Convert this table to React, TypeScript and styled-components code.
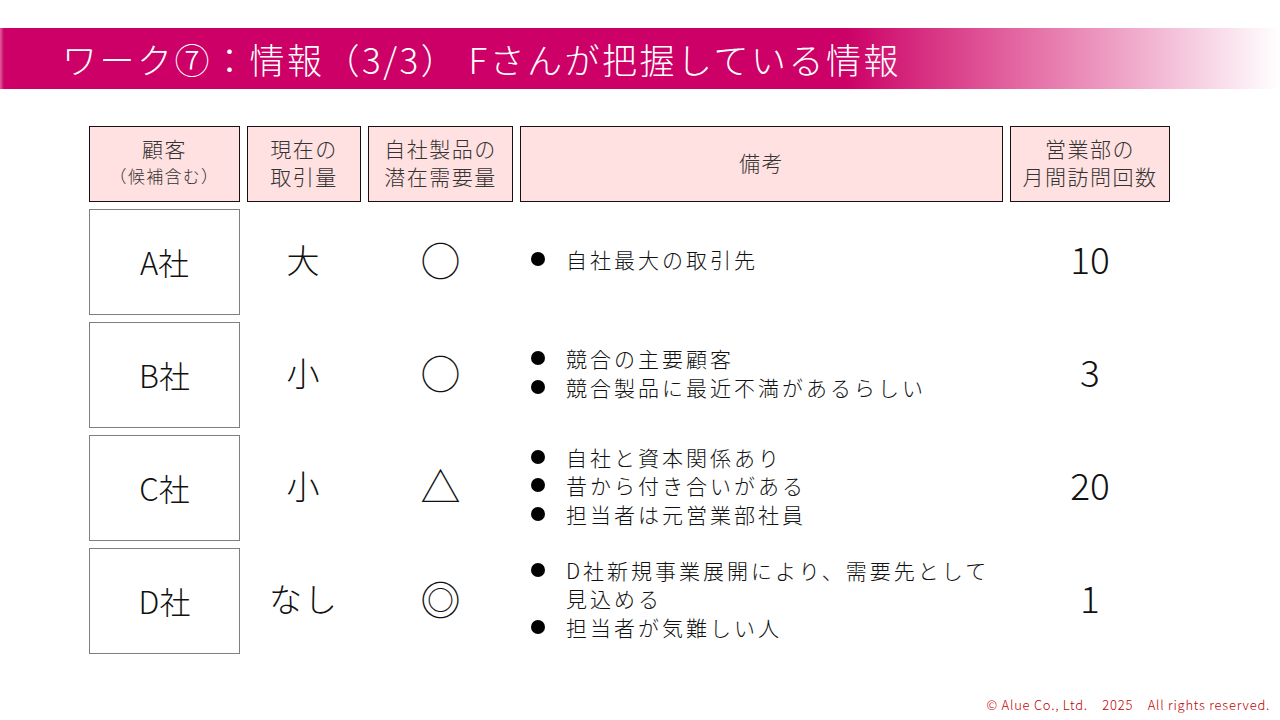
import styled, {createGlobalStyle} from "styled-components"

const GlobalStyle = createGlobalStyle`
  html, body {
    margin: 0;
    padding: 0;
    background: #fff;
  }
  body {
    font-family: "Noto Sans CJK JP", "Noto Sans", sans-serif;
    font-weight: 300;
    color: #111;
  }
`

type Row = {
  name: string
  amount: string
  potential: string
  notes: string[][]
  visits: string
}

const rows: Row[] = [
  {name: "A社", amount: "大", potential: "○", notes: [["自社最大の取引先"]], visits: "10"},
  {
    name: "B社", amount: "小", potential: "○",
    notes: [["競合の主要顧客"], ["競合製品に最近不満があるらしい"]],
    visits: "3"
  },
  {
    name: "C社", amount: "小", potential: "△",
    notes: [["自社と資本関係あり"], ["昔から付き合いがある"], ["担当者は元営業部社員"]],
    visits: "20"
  },
  {
    name: "D社", amount: "なし", potential: "◎",
    notes: [["D社新規事業展開により、需要先として", "見込める"], ["担当者が気難しい人"]],
    visits: "1"
  },
]

export default function App() {
  return (
    <Page>
      <GlobalStyle />
      <TitleBar>
        <Title>ワーク⑦：情報（3/3） Fさんが把握している情報</Title>
      </TitleBar>

      <Table>
        <HeadCell>
          <span>顧客</span>
          <Small>（候補含む）</Small>
        </HeadCell>
        <HeadCell>現在の<br />取引量</HeadCell>
        <HeadCell>自社製品の<br />潜在需要量</HeadCell>
        <HeadCell>備考</HeadCell>
        <HeadCell>営業部の<br />月間訪問回数</HeadCell>

        {rows.map((r) => (
          <RowGroup key={r.name}>
            <NameCell>{r.name}</NameCell>
            <AmountCell>{r.amount}</AmountCell>
            <SymbolCell>{r.potential}</SymbolCell>
            <NoteCell>
              {r.notes.map((lines, i) => (
                <Note key={i}>
                  <Dot />
                  <NoteText>
                    {lines.map((l, j) => (
                      <span key={j}>{l}</span>
                    ))}
                  </NoteText>
                </Note>
              ))}
            </NoteCell>
            <CountCell>{r.visits}</CountCell>
          </RowGroup>
        ))}
      </Table>

      <Footer>© Alue Co., Ltd.&nbsp;&nbsp;&nbsp;&nbsp;2025&nbsp;&nbsp;&nbsp;&nbsp;All rights reserved.</Footer>
    </Page>
  )
}

const Page = styled.div`
  width: 1280px;
  height: 720px;
  display: flex;
  flex-direction: column;
  overflow: hidden;
`

const TitleBar = styled.div`
  margin-top: 28px;
  height: 61px;
  display: flex;
  align-items: center;
  padding-left: 62px;
  background: linear-gradient(90deg, #e0609a 0px, #cc0066 4px, #cc0066 66%, #e46ba4 80%, #ffffff 100%);
`

const Title = styled.h1`
  margin: 0;
  color: #fff;
  font-size: 35px;
  font-weight: 300;
  letter-spacing: 2.5px;
  line-height: 1;
  white-space: pre;
`

const Table = styled.div`
  margin: 37px 0 0 89px;
  display: grid;
  grid-template-columns: 151px 114px 145px 483px 160px;
  grid-template-rows: 76px repeat(4, 106px);
  column-gap: 7px;
  row-gap: 7px;
`

const RowGroup = styled.div`
  display: contents;
`

const HeadCell = styled.div`
  box-sizing: border-box;
  border: 1px solid #1a1010;
  background: #ffe1e1;
  color: #333;
  display: flex;
  flex-direction: column;
  align-items: center;
  justify-content: center;
  padding-bottom: 5px;
  text-align: center;
  font-size: 21px;
  line-height: 28px;
  letter-spacing: 1.5px;
`

const Small = styled.span`
  font-size: 17px;
  letter-spacing: 1.3px;
`

const NameCell = styled.div`
  box-sizing: border-box;
  border: 1px solid #7f7f7f;
  display: flex;
  align-items: center;
  justify-content: center;
  font-size: 31px;
  padding-bottom: 2px;
`

const AmountCell = styled.div`
  display: flex;
  align-items: center;
  justify-content: center;
  padding-bottom: 6px;
  font-size: 33px;
  letter-spacing: 2px;
`

const SymbolCell = styled.div`
  display: flex;
  align-items: center;
  justify-content: center;
  padding-bottom: 7px;
  font-size: 40px;
  line-height: 1;
`

const NoteCell = styled.div`
  display: flex;
  flex-direction: column;
  justify-content: center;
  padding: 0 0 5px 11px;
`

const Note = styled.div`
  display: flex;
  align-items: flex-start;
  gap: 21px;
  font-size: 21px;
  line-height: 28.5px;
  letter-spacing: 3px;
`

const Dot = styled.span`
  flex: none;
  width: 14px;
  height: 14px;
  margin-top: 7px;
  border-radius: 50%;
  background: #000;
`

const NoteText = styled.div`
  display: flex;
  flex-direction: column;
  white-space: nowrap;
`

const CountCell = styled.div`
  display: flex;
  align-items: center;
  justify-content: center;
  padding-bottom: 8px;
  font-size: 37px;
`

const Footer = styled.div`
  margin-top: auto;
  margin-bottom: 6px;
  align-self: flex-end;
  padding-right: 10px;
  color: #c00000;
  font-size: 13px;
  letter-spacing: 0.75px;
`
